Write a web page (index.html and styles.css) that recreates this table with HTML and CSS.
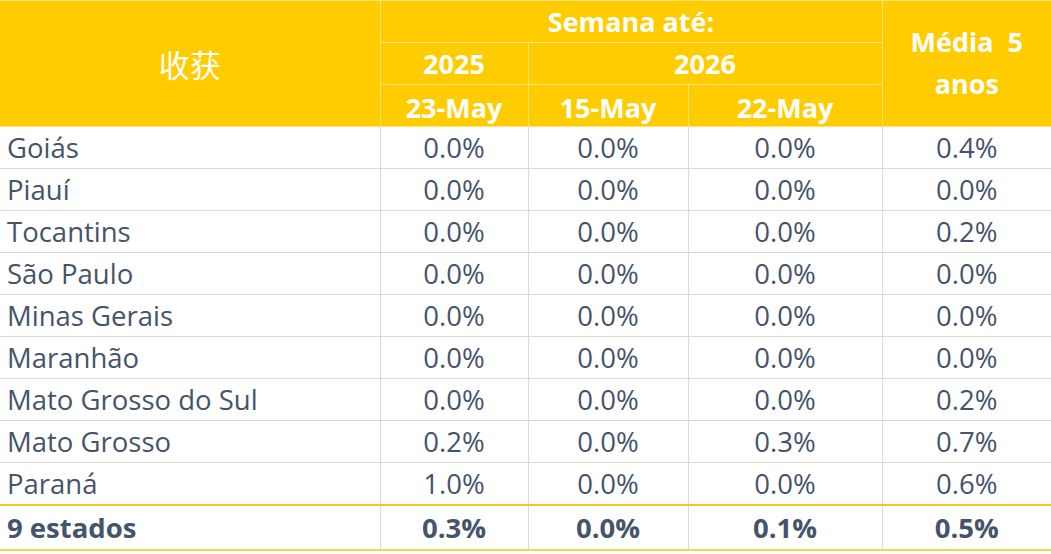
FILE: index.html
```html
<!DOCTYPE html>
<html lang="pt">
<head>
<meta charset="utf-8">
<title>Colheita</title>
<link rel="stylesheet" href="styles.css">
</head>
<body>
<table class="grid">
  <colgroup>
    <col class="c1"><col class="c2"><col class="c3"><col class="c4"><col class="c5">
  </colgroup>
  <thead>
    <tr class="hrow">
      <th rowspan="3" class="title">收获</th>
      <th colspan="3">Semana até:</th>
      <th rowspan="3" class="avg">Média&nbsp;&nbsp;5<br>anos</th>
    </tr>
    <tr class="hrow">
      <th>2025</th>
      <th colspan="2">2026</th>
    </tr>
    <tr class="hrow">
      <th class="low">23-May</th>
      <th class="low">15-May</th>
      <th class="low">22-May</th>
    </tr>
  </thead>
  <tbody>
    <tr><td class="name">Goiás</td><td>0.0%</td><td>0.0%</td><td>0.0%</td><td>0.4%</td></tr>
    <tr><td class="name">Piauí</td><td>0.0%</td><td>0.0%</td><td>0.0%</td><td>0.0%</td></tr>
    <tr><td class="name">Tocantins</td><td>0.0%</td><td>0.0%</td><td>0.0%</td><td>0.2%</td></tr>
    <tr><td class="name">São Paulo</td><td>0.0%</td><td>0.0%</td><td>0.0%</td><td>0.0%</td></tr>
    <tr><td class="name">Minas Gerais</td><td>0.0%</td><td>0.0%</td><td>0.0%</td><td>0.0%</td></tr>
    <tr><td class="name">Maranhão</td><td>0.0%</td><td>0.0%</td><td>0.0%</td><td>0.0%</td></tr>
    <tr><td class="name">Mato Grosso do Sul</td><td>0.0%</td><td>0.0%</td><td>0.0%</td><td>0.2%</td></tr>
    <tr><td class="name">Mato Grosso</td><td>0.2%</td><td>0.0%</td><td>0.3%</td><td>0.7%</td></tr>
    <tr><td class="name">Paraná</td><td>1.0%</td><td>0.0%</td><td>0.0%</td><td>0.6%</td></tr>
  </tbody>
  <tfoot>
    <tr class="total"><td class="name">9 estados</td><td>0.3%</td><td>0.0%</td><td>0.1%</td><td>0.5%</td></tr>
  </tfoot>
</table>
</body>
</html>
```
FILE: styles.css
```css
html, body {
  margin: 0;
  padding: 0;
  background: #ffffff;
}
body {
  font-family: "Open Sans", Lato, "Noto Sans CJK SC", sans-serif;
  color: #44546a;
}
.grid {
  border-collapse: collapse;
  table-layout: fixed;
  width: 1051px;
  border-top: 1px solid #c9b46a;
}
.c1 { width: 380px; }
.c2 { width: 148px; }
.c3 { width: 160px; }
.c4 { width: 194px; }
.c5 { width: 169px; }

th {
  background: #ffcc00;
  color: #ffffff;
  font-weight: 700;
  font-size: 27px;
  height: 41px;
  padding: 0;
  line-height: 30px;
  text-align: center;
  border: 1px solid #ffe17a;
}
th.low {
  vertical-align: bottom;
  line-height: 32px;
  padding-bottom: 2px;
  height: 39px;
}
th.title {
  font-family: "Noto Sans CJK SC", sans-serif;
  font-weight: 400;
  font-size: 31px;
  border-left: none;
}
th.avg {
  line-height: 42px;
  vertical-align: middle;
  padding-top: 2px;
  padding-bottom: 4px;
  border-right: none;
}
td {
  height: 41px;
  padding: 0;
  font-size: 27.5px;
  text-align: center;
  border: 1px solid #dadada;
  line-height: 30px;
}
td.name {
  text-align: left;
  padding-left: 7px;
  border-left: none;
}
tbody tr td:last-child, tfoot tr td:last-child {
  border-right: none;
}
.total td {
  font-weight: 700;
  height: 43px;
  border-top: 2px solid #f5c518;
  border-bottom: 2px solid #f5d547;
}
```
